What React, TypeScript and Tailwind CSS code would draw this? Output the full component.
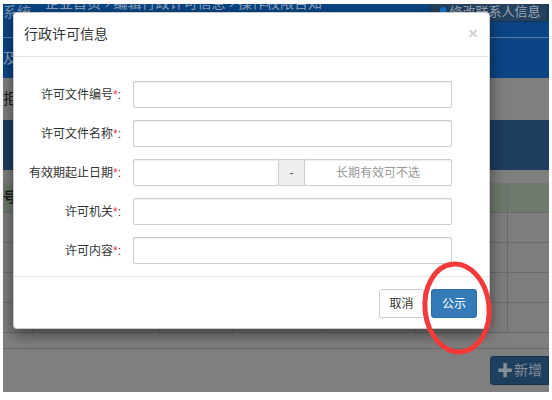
import type { ReactNode } from "react"

function Field({ label, children }: { label: string; children: ReactNode }) {
  return (
    <div className="flex items-center h-[27px]">
      <label className="w-[107px] text-right text-[12px] leading-none text-[#333]">
        {label}
        <span className="text-[#e4393c]">*</span>:
      </label>
      <div className="ml-[12px] w-[319px] h-[27px] flex">{children}</div>
    </div>
  )
}

function TextInput({ className = "", placeholder }: { className?: string; placeholder?: string }) {
  return (
    <input
      placeholder={placeholder}
      className={`h-[27px] border border-[#ccc] rounded-[2px] bg-white px-2 text-[12px] outline-none shadow-[inset_0_1px_1px_rgba(0,0,0,0.075)] placeholder:text-[#999] ${className}`}
    />
  )
}

function TableRow({ header }: { header?: boolean }) {
  const cell = "border-r border-[#6a6a6a] h-full"
  return (
    <div
      className={`grid grid-cols-[30px_127px_73px_90px_93px_92px_1fr] h-[30px] border-b border-[#6a6a6a] ${
        header ? "bg-[#6e7a6d]" : "bg-[#7d7d7d]"
      }`}
    >
      <div className={`${cell} flex items-center text-[14px] font-bold text-[#1f1f1f]`}>{header ? "号" : ""}</div>
      <div className={cell} />
      <div className={cell} />
      <div className={cell} />
      <div className={cell} />
      <div className={cell} />
      <div />
    </div>
  )
}

export default function App() {
  return (
    <div className="relative w-[552px] h-[400px] bg-white overflow-hidden font-['Liberation_Sans','Noto_Sans_CJK_SC',sans-serif]">
      {/* dimmed page behind the dialog */}
      <div className="ml-[3px] mt-[4px] w-[546px] h-[388px] flex flex-col overflow-hidden bg-[#7f7f7f]">
        <div className="h-[33px] bg-[#0b4585] flex items-start">
          <span className="mt-[1px] text-[14px] text-[#7f95b3] leading-none">系统</span>
          <span className="ml-[14px] -mt-[8px] text-[14px] text-[#8ea3bf] leading-none">企业首页 › 编辑行政许可信息 › 操作权限告知</span>
          <div className="ml-auto mr-[1px] w-[118px] h-[18px] bg-[#24425f] border border-t-0 border-[#163352] rounded-b-[4px] flex items-end justify-center overflow-hidden">
            <span className="text-[13px] leading-none text-[#9aa7b8] pb-[3px]">
              <span className="text-[10px] text-[#7a8898]">👤</span>修改联系人信息
            </span>
          </div>
        </div>
        <div className="h-px bg-[#5b7ea6]" />
        <div className="h-[40px] bg-[#0b4585] flex items-center">
          <span className="text-[14px] text-[#8ea3bf]">及</span>
        </div>
        <div className="h-[42px] flex items-center">
          <span className="text-[15px] text-[#1c1c1c]">拒</span>
        </div>
        <div className="h-[50px] bg-[#1e3d5f]" />
        <div className="h-[13px]" />
        <TableRow header />
        <TableRow />
        <TableRow />
        <TableRow />
        <TableRow />
        <div className="h-[16px] border-b border-[#6a6a6a]" />
        <div className="flex justify-end mt-[7px]">
          <div className="w-[59px] h-[29px] bg-[#1f3f5f] border border-[#183350] rounded-l-[3px] flex items-center justify-center text-[14px] text-[#858d97]">
            <span className="font-bold text-[16px] leading-none mr-[1px]">✚</span>新增
          </div>
        </div>
      </div>

      {/* dialog */}
      <div className="absolute left-[13px] top-[12px] w-[477px] bg-white rounded-[4px] border border-black/20 shadow-[0_5px_15px_rgba(0,0,0,0.5)] flex flex-col">
        <div className="h-[44px] border-b border-[#e5e5e5] flex items-center justify-between pl-[10px] pr-[11px]">
          <span className="text-[14px] text-[#333]">行政许可信息</span>
          <span className="text-[17px] font-bold leading-none text-black/20 -mt-[3px]">×</span>
        </div>
        <div className="pt-[24px] pb-[12px] flex flex-col gap-[12px]">
          <Field label="许可文件编号">
            <TextInput className="w-full" />
          </Field>
          <Field label="许可文件名称">
            <TextInput className="w-full" />
          </Field>
          <Field label="有效期起止日期">
            <TextInput className="w-[146px] rounded-r-none" />
            <span className="w-[25px] h-[27px] border-y border-[#ccc] bg-[#eee] flex items-center justify-center text-[12px] text-[#555]">-</span>
            <TextInput className="w-[148px] rounded-l-none text-center" placeholder="长期有效可不选" />
          </Field>
          <Field label="许可机关">
            <TextInput className="w-full" />
          </Field>
          <Field label="许可内容">
            <TextInput className="w-full" />
          </Field>
        </div>
        <div className="border-t border-[#e5e5e5] flex justify-end gap-[7px] pt-[12px] pb-[10px] pr-[12px]">
          <button className="w-[45px] h-[29px] border border-[#ccc] bg-white rounded-[3px] text-[12px] text-[#333]">取消</button>
          <button className="w-[46px] h-[29px] border border-[#2e6da4] bg-[#337ab7] rounded-[3px] text-[12px] text-white">公示</button>
        </div>
      </div>

      {/* red annotation ring */}
      <svg className="absolute left-[419px] top-[259px]" width="76" height="98" viewBox="0 0 76 98">
        <ellipse cx="38" cy="49" rx="32" ry="44" fill="none" stroke="#f43a3a" strokeWidth="5" transform="rotate(-6 38 49)" />
      </svg>
    </div>
  )
}
